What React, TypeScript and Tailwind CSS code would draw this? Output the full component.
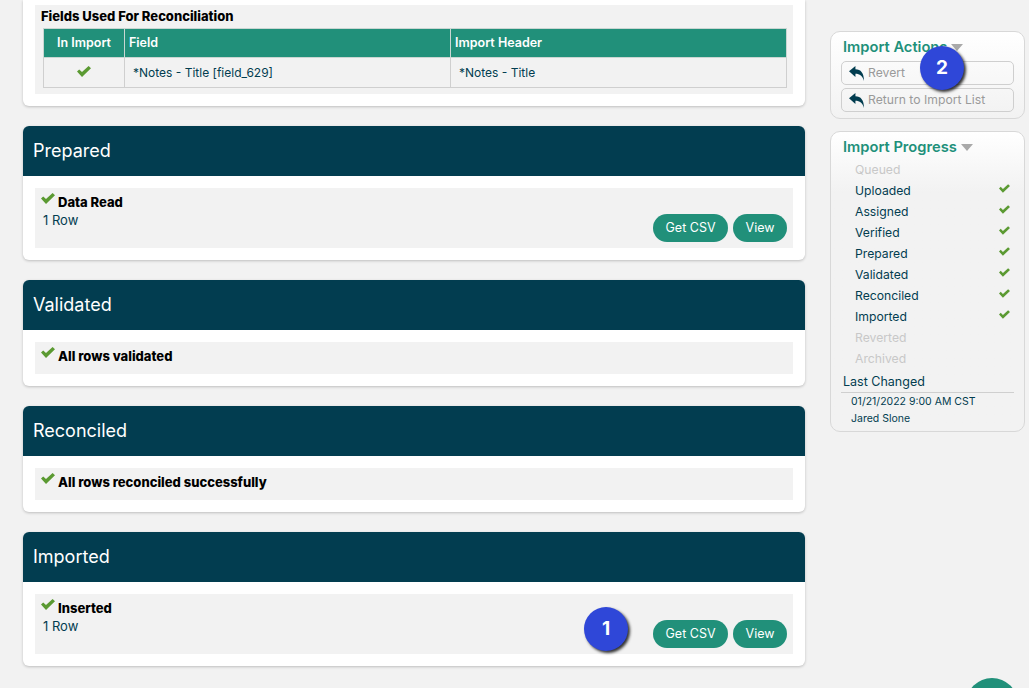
const font = { fontFamily: 'Inter, "Liberation Sans", sans-serif' };

function Check({ className }: { className?: string }) {
  return (
    <svg viewBox="0 0 14 11" className={className} fill="#5b9a32">
      <polygon points="0,5.6 2.2,3.4 5,6.1 11.6,0 14,2.2 5,11" />
    </svg>
  );
}

function ReplyIcon() {
  return (
    <svg viewBox="0 0 14 14" className="w-[15px] h-[15px] mr-[4px]" fill="#023d50">
      <path d="M0 5 L6 0 V3 C11 3 14 6.5 14 14 C12.8 9.5 10 7.2 6 7.2 V10.2 Z" />
    </svg>
  );
}

function Pill({ label }: { label: string }) {
  return (
    <button
      type="button"
      className="h-7 px-[12.5px] rounded-full bg-[#21907a] text-white text-[12.5px] leading-7"
    >
      {label}
    </button>
  );
}

function Section({
  title,
  label,
  rows,
}: {
  title: string;
  label: string;
  rows?: string;
}) {
  return (
    <div className="bg-white rounded-md shadow-[0_1px_3px_rgba(0,0,0,0.22)] overflow-hidden">
      <div className="h-[50px] bg-[#023d50] text-white text-[18px] leading-[50px] pl-[10px]">
        {title}
      </div>
      <div className="p-3">
        <div className={`relative bg-[#f2f2f2] pl-[6px] pt-[3px] text-[13px] ${rows ? 'h-[60px]' : 'h-8'}`}>
          <div className="flex items-start">
            <Check className="w-[14px] h-[11px] mt-[2px] mr-[3px]" />
            <span className="font-extrabold text-black leading-5 mt-[1px]">{label}</span>
          </div>
          {rows && (
            <>
              <div className="text-[#023d50] leading-4 pl-[2px]">{rows}</div>
              <div className="absolute right-[6px] bottom-[6px] flex gap-[5px]">
                <Pill label="Get CSV" />
                <Pill label="View" />
              </div>
            </>
          )}
        </div>
      </div>
    </div>
  );
}

function PanelTitle({ title }: { title: string }) {
  return (
    <div className="flex items-center gap-[4px] pl-3 text-[14.7px] font-semibold text-[#21907a] leading-5">
      {title}
      <span className="w-0 h-0 border-x-[6px] border-x-transparent border-t-[7px] border-t-[#a9a9a9] mt-[1px]" />
    </div>
  );
}

function ActionButton({ label }: { label: string }) {
  return (
    <div className="h-[24px] flex items-center rounded-[5px] border border-[#cfcfcf] pl-[7px] text-[12.2px] text-[#9a9a9a]">
      <ReplyIcon />
      {label}
    </div>
  );
}

const steps = [
  { name: 'Queued', done: false },
  { name: 'Uploaded', done: true },
  { name: 'Assigned', done: true },
  { name: 'Verified', done: true },
  { name: 'Prepared', done: true },
  { name: 'Validated', done: true },
  { name: 'Reconciled', done: true },
  { name: 'Imported', done: true },
  { name: 'Reverted', done: false },
  { name: 'Archived', done: false },
];

export default function App() {
  return (
    <div style={font} className="relative h-[688px] w-[1029px] overflow-hidden bg-[#f2f2f2]">
      <div className="flex items-start">
        {/* main column */}
        <div className="w-[782px] ml-[23px] flex flex-col gap-5">
          <div className="bg-white rounded-b-md shadow-[0_1px_3px_rgba(0,0,0,0.22)] px-3 pt-[5px] pb-3">
            <div className="bg-[#f2f2f2] h-[89px] pt-[3px] px-[6px]">
              <div className="text-[13px] font-extrabold text-black leading-4 h-5">
                Fields Used For Reconciliation
              </div>
              <table className="w-[744px] ml-[2px] border-collapse text-[12.5px] table-fixed">
                <thead>
                  <tr className="h-[29px] bg-[#21907a] text-white">
                    <th className="w-[81px] pt-[1px] font-semibold border border-[#c9d6d2]">In Import</th>
                    <th className="w-[326px] pt-[1px] font-semibold text-left pl-1 border border-[#c9d6d2]">Field</th>
                    <th className="pt-[1px] font-semibold text-left pl-1 border border-[#c9d6d2]">Import Header</th>
                  </tr>
                </thead>
                <tbody>
                  <tr className="h-[30px] text-[#023d50] text-[12px]">
                    <td className="border border-[#cfcfcf]">
                      <Check className="w-[14px] h-[11px] mx-auto mb-[3px]" />
                    </td>
                    <td className="pl-2 pt-[1px] border border-[#cfcfcf]">*Notes - Title [field_629]</td>
                    <td className="pl-2 pt-[1px] border border-[#cfcfcf]">*Notes - Title</td>
                  </tr>
                </tbody>
              </table>
            </div>
          </div>
          <Section title="Prepared" label="Data Read" rows="1 Row" />
          <Section title="Validated" label="All rows validated" />
          <Section title="Reconciled" label="All rows reconciled successfully" />
          <Section title="Imported" label="Inserted" rows="1 Row" />
        </div>

        {/* side column */}
        <div className="w-[195px] ml-[25px] mt-[31px] flex flex-col gap-3">
          <div className="h-[88px] rounded-[10px] border border-[#d8d8d8] bg-gradient-to-b from-white to-[#f2f2f2] pt-[5px] px-[10px]">
            <div className="-ml-[10px] -mr-[10px]">
              <PanelTitle title="Import Actions" />
            </div>
            <div className="mt-[4px] flex flex-col gap-[3px]">
              <ActionButton label="Revert" />
              <ActionButton label="Return to Import List" />
            </div>
          </div>
          <div className="h-[301px] rounded-[10px] border border-[#d8d8d8] bg-gradient-to-b from-white to-[#f2f2f2] to-[20%] pt-[5px]">
            <PanelTitle title="Import Progress" />
            <div className="mt-[3px]">
              {steps.map((s) => (
                <div
                  key={s.name}
                  className={`h-[21px] flex items-center justify-between pl-6 pr-[14px] text-[12.2px] ${
                    s.done ? 'text-[#023d50]' : 'text-[#c8c8c8]'
                  }`}
                >
                  <span>{s.name}</span>
                  {s.done && <Check className="w-[11px] h-[9px] mb-[7px]" />}
                </div>
              ))}
            </div>
            <div className="mx-[10px] mt-[2px] border-b border-[#cfcfcf] pl-[2px] text-[12.5px] leading-[20px] text-[#023d50]">
              Last Changed
            </div>
            <div className="pl-5 text-[10.5px] text-[#023d50]">
              <div className="h-[17px] leading-[17px]">01/21/2022 9:00 AM CST</div>
              <div className="h-[17px] leading-[17px]">Jared Slone</div>
            </div>
          </div>
        </div>
      </div>

      {/* callout badges */}
      <div className="absolute left-[584px] top-[607px] w-11 h-11 rounded-full bg-[#2f47d8] text-white font-bold text-[19px] flex items-center justify-center shadow-[2px_2px_3px_rgba(0,0,0,0.8)]">
        1
      </div>
      <div className="absolute left-[920px] top-[46px] w-11 h-11 rounded-full bg-[#2f47d8] text-white font-bold text-[19px] flex items-center justify-center shadow-[2px_2px_3px_rgba(0,0,0,0.8)]">
        2
      </div>
      <div className="absolute left-[966px] top-[678px] w-[52px] h-[52px] rounded-full bg-[#21907a]" />
    </div>
  );
}
